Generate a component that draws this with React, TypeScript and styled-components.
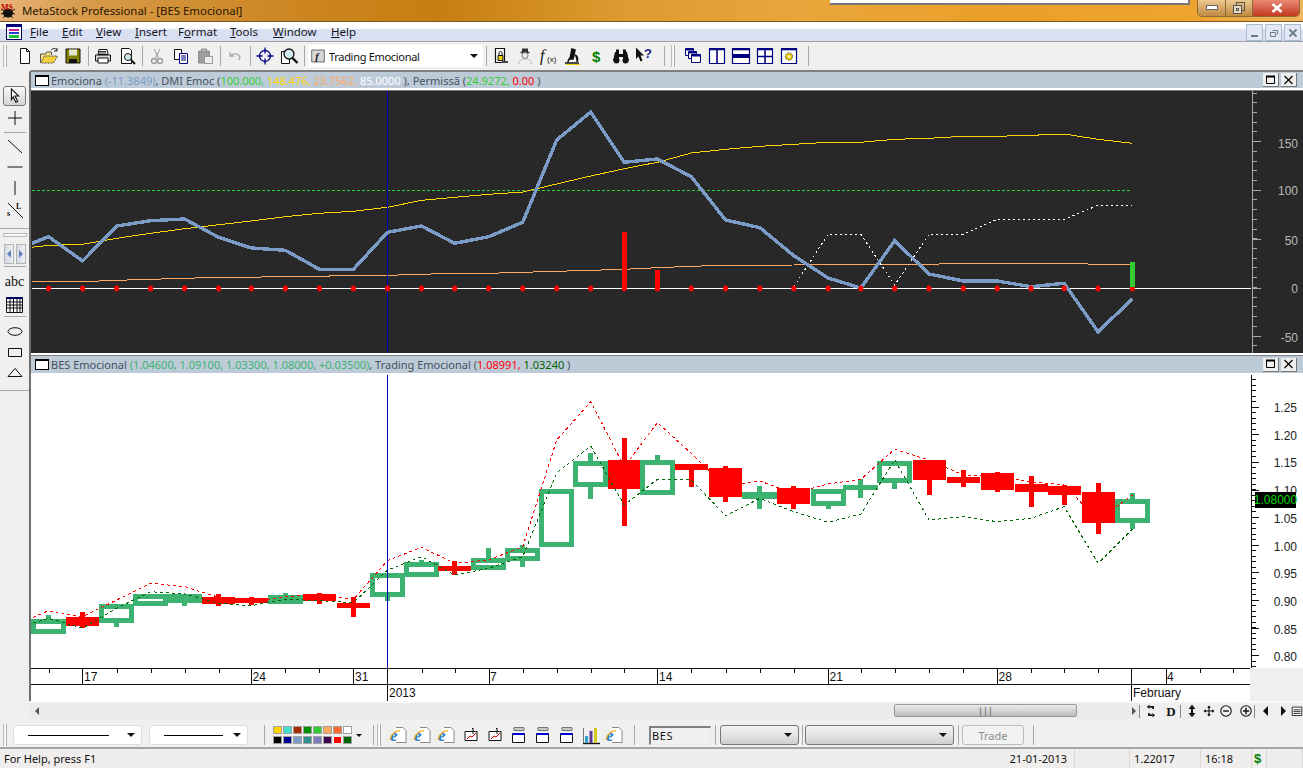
import React from 'react';
import styled, { createGlobalStyle } from 'styled-components';

const GlobalStyle = createGlobalStyle`
  html, body { margin: 0; padding: 0; background: #f0f0f0; overflow: hidden; }
  body { font-family: "Noto Sans", "Liberation Sans", sans-serif; font-size: 11px; color: #111; }
`;

const Window = styled.div`
  width: 1303px;
  height: 768px;
  display: grid;
  grid-template-rows: 21px 21px 28px 649px 30px 19px;
  overflow: hidden;
`;

const TitleBar = styled.div`
  position: relative;
  display: flex;
  align-items: center;
  gap: 6px;
  background: linear-gradient(90deg, #e8b47a 0, #d69a48 90px, #cc8520 300px, #c67e12 440px, #dd9a30 620px, #e8a63c 800px, #ec9f28 1000px, #eea42f 1200px, #efb45e 1303px);
`;

const TitleText = styled.span`
  font-size: 11.4px;
  color: #2a1500;
`;

const BehindWindow = styled.div`
  position: absolute;
  left: 830px;
  top: 0;
  width: 358px;
  height: 3px;
  background: #fff;
  border-right: 2px solid #777;
  border-bottom: 2px solid #777;
`;

const Caption = styled.div`
  position: absolute;
  right: 3px;
  top: 0;
  width: 103px;
  height: 17px;
  display: grid;
  grid-template-columns: 28px 27px 48px;
  border: 1px solid #8a6a38;
  border-top: none;
  border-radius: 0 0 5px 5px;
  box-sizing: border-box;
  overflow: hidden;
`;

const CaptionButton = styled.div<{ $close?: boolean }>`
  display: flex;
  align-items: center;
  justify-content: center;
  background: ${(p) => (p.$close ? 'linear-gradient(#e88a70, #d8604a 50%, #c23a1e)' : 'linear-gradient(#edc892, #d6a868 50%, #c08a40)')};
  border-right: 1px solid #8a6a38;
  &:last-child { border-right: none; }
`;

const MenuBar = styled.div`
  position: relative;
  display: flex;
  align-items: center;
  border-top: 1px solid #7a5a20;
  border-bottom: 1px solid #a2a2a2;
  box-sizing: border-box;
  background: linear-gradient(#fff 0, #fff 6px, #d9e0f2 8px, #d9e0f2 100%);
  padding-left: 6px;
`;

const MenuItems = styled.div`
  display: flex;
  margin-left: 8px;
`;

const MenuItem = styled.span<{ $w: number }>`
  width: ${(p) => p.$w}px;
  font-size: 11.5px;
  color: #16161e;
  u { text-decoration: underline; }
`;

const MdiButtons = styled.div`
  position: absolute;
  right: 2px;
  top: 2px;
  display: flex;
  gap: 2px;
`;

const MdiButton = styled.div`
  width: 17px;
  height: 17px;
  box-sizing: border-box;
  border: 1px solid #a9bdd0;
  background: #e3e8f4;
  display: flex;
  align-items: center;
  justify-content: center;
`;

const ToolBar = styled.div`
  display: flex;
  align-items: center;
  background: #f0f0f0;
  padding-left: 3px;
`;

const Grip = styled.div`
  width: 3px;
  height: 22px;
  margin-right: 7px;
  box-sizing: border-box;
  border-left: 1px solid #bbb;
  border-right: 1px solid #fff;
  box-shadow: 1px 0 0 #aaa;
  flex: none;
`;

const Sep = styled.div<{ $w?: number }>`
  width: ${(p) => p.$w ?? 6}px;
  height: 20px;
  display: flex;
  justify-content: center;
  flex: none;
  &::before { content: ''; width: 1px; height: 100%; background: #a8a8a8; }
`;

const ToolButton = styled.div<{ $w?: number }>`
  width: ${(p) => p.$w ?? 24}px;
  height: 22px;
  display: flex;
  align-items: center;
  justify-content: center;
  flex: none;
`;

const Combo = styled.div`
  width: 175px;
  height: 22px;
  margin-left: 1px;
  background: #fff;
  border-radius: 2px;
  display: flex;
  align-items: center;
  gap: 4px;
  padding: 0 5px 0 3px;
  box-sizing: border-box;
  font-size: 11px;
  letter-spacing: -0.3px;
  flex: none;
`;

const DownCaret = styled.span`
  margin-left: auto;
  width: 0;
  height: 0;
  border-left: 4px solid transparent;
  border-right: 4px solid transparent;
  border-top: 4px solid #111;
`;

const PaletteCaret = styled(DownCaret)`
  margin-left: 0;
  margin-right: 3px;
  border-left-width: 3px;
  border-right-width: 3px;
  border-top-width: 3px;
`;

const Main = styled.div`
  display: grid;
  grid-template-columns: 31px 1fr;
  min-height: 0;
`;

const SideBar = styled.div`
  background: #f0f0f0;
  border-right: 2px solid #6e6e6e;
  border-top: 2px solid #f0f0f0;
  box-sizing: border-box;
  display: flex;
  flex-direction: column;
  align-items: center;
  padding-top: 14px;
`;

const SideSlot = styled.div<{ $h?: number; $active?: boolean }>`
  width: 23px;
  height: ${(p) => p.$h ?? 21}px;
  box-sizing: border-box;
  display: flex;
  align-items: center;
  justify-content: center;
  flex: none;
  ${(p) => p.$active && 'border: 1px solid #777; border-radius: 3px; background: linear-gradient(#fafafa, #d4d4d4);'}
`;

const SideRule = styled.div<{ $my?: number }>`
  width: 22px;
  height: 1px;
  background: #a8a8a8;
  margin: ${(p) => p.$my ?? 2}px 0;
  flex: none;
`;

const SideBreak = styled.div`
  align-self: stretch;
  height: 1px;
  background: #a8a8a8;
  margin-top: 6px;
  flex: none;
`;

const SideGrip = styled.div`
  width: 22px;
  height: 2px;
  border: 1px solid #bbb;
  background: #f8f8f8;
  margin: 4px 0 7px;
  flex: none;
`;

const ArrowPair = styled.div`
  width: 22px;
  height: 20px;
  flex: none;
  display: grid;
  grid-template-columns: 1fr 1fr;
  gap: 2px;
  div {
    background: linear-gradient(90deg, #d5dae2, #eef0f4);
    border: 1px solid #b5b5b5;
    display: flex;
    align-items: center;
    justify-content: center;
  }
`;

const Abc = styled.span`
  font-family: "Liberation Serif", serif;
  font-size: 14px;
  color: #111;
`;

const Panes = styled.div`
  display: flex;
  flex-direction: column;
  min-width: 0;
`;

const PaneGap = styled.div`
  height: 3px;
  box-sizing: border-box;
  background: #fff;
  border-bottom: 1px solid #808080;
  flex: none;
`;

const LegendBar = styled.div<{ $h: number; $top: string }>`
  height: ${(p) => p.$h}px;
  box-sizing: border-box;
  background: #bdcbd9;
  border-top: ${(p) => p.$top};
  border-bottom: 2px solid #fff;
  display: flex;
  align-items: center;
  padding: 0 6px 0 4px;
  flex: none;
  font-size: 11px;
  color: #47505c;
  white-space: pre;
`;

const LegendSwatch = styled.span`
  width: 12px;
  height: 8px;
  border: 1px solid #000;
  border-top-width: 2px;
  background: #fff;
  margin-right: 2px;
  flex: none;
`;

const Val = styled.span<{ $c: string }>`
  color: ${(p) => p.$c};
`;

const LegendButtons = styled.div`
  margin-left: auto;
  display: flex;
  gap: 2px;
`;

const LegendButton = styled.div`
  width: 15px;
  height: 13px;
  background: #efefef;
  border-right: 1px solid #777;
  border-bottom: 1px solid #777;
  display: flex;
  align-items: center;
  justify-content: center;
`;

const Plot = styled.svg<{ $h: number; $bg: string }>`
  display: block;
  width: 1272px;
  height: ${(p) => p.$h}px;
  background: ${(p) => p.$bg};
  flex: none;
  text { font-family: "Liberation Sans", Arial, sans-serif; font-size: 12px; }
`;

const DateRow = styled.div`
  display: flex;
  height: 33px;
  flex: none;
`;

const DateAxis = styled.svg`
  display: block;
  width: 1219px;
  height: 33px;
  background: #fff;
  flex: none;
  text { font-family: "Liberation Sans", Arial, sans-serif; font-size: 12px; fill: #111; }
`;

const DateBlank = styled.div`
  flex: 1;
  background: #efefef;
`;

const ScrollRow = styled.div`
  display: flex;
  align-items: center;
  height: 18px;
  margin-left: -2px;
  position: relative;
  box-sizing: border-box;
  border-top: 2px solid #fafafa;
  background: #efefef;
  flex: none;
`;

const ScrollTrack = styled.div`
  position: relative;
  width: 1110px;
  height: 100%;
  background: #ebebeb;
  display: flex;
  align-items: center;
  justify-content: space-between;
  padding: 0 3px 0 6px;
  box-sizing: border-box;
  flex: none;
`;

const ScrollThumb = styled.div`
  position: absolute;
  left: 865px;
  top: 1px;
  width: 183px;
  height: 13px;
  border: 1px solid #999;
  border-radius: 2px;
  box-sizing: border-box;
  background: linear-gradient(#ececec, #d4d4d4 50%, #bcbcbc);
  display: flex;
  align-items: center;
  justify-content: center;
  color: #555;
  font-size: 9px;
`;

const Tri = styled.span<{ $dir: 'l' | 'r'; $c?: string; $s?: number }>`
  width: 0;
  height: 0;
  border-top: ${(p) => p.$s ?? 4}px solid transparent;
  border-bottom: ${(p) => p.$s ?? 4}px solid transparent;
  ${(p) => (p.$dir === 'l' ? 'border-right' : 'border-left')}: ${(p) => p.$s ?? 4}px solid ${(p) => p.$c ?? '#555'};
`;

const NavTools = styled.div`
  display: flex;
  align-items: center;
  flex: none;
`;

const NavSep = styled.div`
  width: 1px;
  height: 13px;
  background: #888;
  flex: none;
`;

const NavButton = styled.div<{ $w: number }>`
  width: ${(p) => p.$w}px;
  display: flex;
  justify-content: center;
  align-items: center;
  flex: none;
`;

const NavLetter = styled.span`
  font-family: "Liberation Serif", serif;
  font-weight: 700;
  font-size: 13px;
  line-height: 13px;
`;

const BottomBar = styled.div`
  display: flex;
  align-items: center;
  background: #f0f0f0;
  border-bottom: 2px solid #a5a5a5;
  box-sizing: border-box;
  padding: 4px 0 0 3px;
`;

const LineSelect = styled.div<{ $w: number; $line: number }>`
  width: ${(p) => p.$w}px;
  height: 20px;
  background: #fff;
  border: 1px solid #dcdcdc;
  border-radius: 3px;
  box-sizing: border-box;
  display: flex;
  align-items: center;
  padding: 0 6px 0 14px;
  margin-right: 7px;
  flex: none;
  &::before { content: ''; width: ${(p) => p.$line}px; height: 1px; background: #000; }
`;

const Palette = styled.div`
  display: grid;
  grid-template-columns: repeat(8, 9px);
  grid-auto-rows: 8px;
  gap: 2px 1px;
  flex: none;
`;

const Swatch = styled.span<{ $c: string; $sel?: boolean }>`
  background: ${(p) => p.$c};
  box-shadow: inset 0 0 0 1px ${(p) => (p.$sel ? '#eee' : '#a0a0a0')};
`;

const SymbolBox = styled.div`
  width: 62px;
  height: 19px;
  margin-left: 8px;
  border-top: 2px solid #808080;
  border-left: 2px solid #808080;
  border-right: 1px solid #e8e8e8;
  border-bottom: 1px solid #e8e8e8;
  box-sizing: border-box;
  padding-left: 1px;
  font-size: 11px;
  line-height: 15px;
  letter-spacing: 0.6px;
  flex: none;
`;

const GreySelect = styled.div<{ $w: number }>`
  width: ${(p) => p.$w}px;
  height: 20px;
  border: 1px solid #777;
  border-radius: 3px;
  box-sizing: border-box;
  background: linear-gradient(#f2f2f2, #e4e4e4 50%, #cfcfcf);
  display: flex;
  align-items: center;
  padding-right: 6px;
  flex: none;
`;

const TradeButton = styled.div`
  width: 62px;
  height: 20px;
  border: 1px solid #bcbcbc;
  border-radius: 3px;
  box-sizing: border-box;
  color: #8a8a8a;
  background: #f2f2f2;
  display: flex;
  align-items: center;
  justify-content: center;
  flex: none;
`;

const StatusBar = styled.div`
  display: grid;
  grid-template-columns: 1075px 55px 71px 51px 15px 1fr;
  align-items: center;
  background: #f0eded;
  font-size: 11px;
  color: #111;
`;

const StatusCell = styled.div<{ $center?: boolean }>`
  height: 100%;
  display: flex;
  align-items: center;
  ${(p) => p.$center && 'justify-content: center;'}
  box-sizing: border-box;
  padding: 0 7px 0 4px;
  border-right: 1px solid #dcd8d8;
`;

const StatusPush = styled.span`
  margin-right: auto;
`;

const Dollar = styled.span`
  color: #008000;
  font-family: "Liberation Sans", sans-serif;
  font-weight: 700;
  font-size: 13px;
`;

const Svg = ({ s = 20, children }: { s?: number; children: React.ReactNode }) => (
  <svg width={s} height={s} viewBox="0 0 20 20" fill="none" style={{ display: 'block' }}>
    {children}
  </svg>
);

const IE = () => (
  <Svg>
    <path d="M7 2.5h7l3 3v12H7" fill="#fff" stroke="#8a8a8a" />
    <text x="1" y="16" fontFamily="Liberation Serif, serif" fontWeight="700" fontStyle="italic" fontSize="17" fill="#1f78d1">e</text>
    <path d="M1 15C2 9 7 5 11 6" stroke="#f0b020" strokeWidth="1.3" />
  </Svg>
);

const MiniChart = () => (
  <Svg>
    <path d="M4 6.5h12v9H4z" fill="#fff" stroke="#111" />
    <path d="M6 14l3-3 2 1 4-4" stroke="#c00" />
    <path d="M12 3v6" stroke="#111" />
    <path d="M11 4l1-1" stroke="#111" />
  </Svg>
);

const MiniWin = () => (
  <Svg>
    <path d="M5 2.5h10v3H5z" fill="#c8c8c8" stroke="#777" />
    <path d="M3.5 8.5h12v9h-12z" fill="#fff" stroke="#111" />
    <path d="M3.5 9h12" stroke="#0000d0" strokeWidth="2" />
  </Svg>
);

const icons: Record<string, React.ReactNode> = {
  new: <Svg><path d="M5.5 2.5h6l3 3v12h-9z" fill="#fff" stroke="#111" /><path d="M11.5 2.5v3h3" stroke="#111" /></Svg>,
  open: <Svg><path d="M1.5 17V8h5l1-2h5v3" fill="#f6e27a" stroke="#555" /><path d="M1.5 17l4-7h13l-4 7z" fill="#f2d040" stroke="#555" strokeDasharray="2 1" /><path d="M12 4c2-2 4-2 6 0M18 2v3h-3" stroke="#222" /></Svg>,
  save: <Svg><path d="M3 3h14v14H3z" fill="#808000" stroke="#111" /><path d="M6 3.5h8v6H6z" fill="#e5e5cf" /><path d="M6 13h8v4H6z" fill="#111" /></Svg>,
  print: <Svg><path d="M6 3.5h8l1 5H5z" fill="#fff" stroke="#111" /><path d="M2.5 9h15v6h-15z" fill="#d8d8d8" stroke="#111" /><path d="M5 12h10v5H5z" fill="#fff" stroke="#111" /><path d="M6 5.5h7M6 7h7" stroke="#333" /></Svg>,
  preview: <Svg><path d="M4.5 2.5h8l2 2v13h-10z" fill="#fff" stroke="#111" /><circle cx="11" cy="11" r="3.5" fill="#cfe8f0" stroke="#111" /><path d="M14 14l4 4" stroke="#111" strokeWidth="2" /></Svg>,
  cut: <Svg><path d="M7 3l4.5 9M13 3L8.5 12" stroke="#999" /><circle cx="7" cy="15" r="2.5" stroke="#999" strokeWidth="1.3" /><circle cx="13" cy="15" r="2.5" stroke="#999" strokeWidth="1.3" /></Svg>,
  copy: <Svg><path d="M3.5 3.5h7v10h-7z" fill="#fff" stroke="#111" /><path d="M8.5 7.5h8v10h-8z" fill="#fff" stroke="#000080" /><path d="M10 10h5M10 12h5M10 14h5" stroke="#000080" /></Svg>,
  paste: <Svg><path d="M3.5 5h11v12h-11z" fill="#9e9e9e" stroke="#8a8a8a" /><path d="M6.5 3h5v3h-5z" fill="#bcbcbc" stroke="#8a8a8a" /><path d="M9.5 10.5h8v7h-8z" fill="#eee" stroke="#999" /></Svg>,
  undo: <Svg><path d="M5 6v4h4" stroke="#aaa" strokeWidth="1.4" /><path d="M5.5 10C8 7 13 7 15 11l-1 3" stroke="#aaa" strokeWidth="1.4" /></Svg>,
  target: <Svg><circle cx="10" cy="10" r="5.5" stroke="#000080" strokeWidth="1.3" /><path d="M10 1.5v6M10 12.5v6M1.5 10h6M12.5 10h6" stroke="#000080" strokeWidth="1.3" /></Svg>,
  zoom: <Svg><path d="M2.5 5.5h8v12h-8z" fill="#fff" stroke="#111" /><circle cx="10" cy="8" r="5" fill="#cfeaf0" stroke="#111" strokeWidth="1.3" /><path d="M13.5 12l5 5" stroke="#111" strokeWidth="2.4" /></Svg>,
  fn: <Svg s={14}><path d="M1 1.5h18v17H1z" fill="#d8d8d8" stroke="#666" strokeWidth="1.4" /><text x="6" y="15" fontFamily="Liberation Serif, serif" fontStyle="italic" fontWeight="700" fontSize="15" fill="#111">f</text></Svg>,
  lock: <Svg><path d="M4.5 2.5h9v14h-9z" fill="#fff" stroke="#111" strokeWidth="1.2" /><path d="M7 9.5h5v5H7z" fill="#e8d000" stroke="#111" /><path d="M8 9V7c0-2 3-2 3 0v2" stroke="#111" /><path d="M11 15h6v2h-6z" fill="#444" /></Svg>,
  spy: <Svg><path d="M5.5 6.5h9" stroke="#333" strokeWidth="1.5" /><path d="M7 2.5h6v4H7z" fill="#333" /><circle cx="10" cy="9.5" r="3" fill="#eee" stroke="#777" /><path d="M4 18v-3l4-2h4l4 2v3" stroke="#999" strokeDasharray="1 1" /></Svg>,
  fx: <Svg><text x="1" y="15" fontFamily="Liberation Serif, serif" fontStyle="italic" fontSize="16" fill="#111">f</text><text x="8" y="16" fontFamily="Liberation Sans, sans-serif" fontSize="8" fill="#111">(x)</text></Svg>,
  scope: <Svg><path d="M2 17h14" stroke="#111" strokeWidth="1.5" /><path d="M3 18.5h14" stroke="#e8d000" /><path d="M9 3l3 1-2 9H7zM5 16c0-3 2-4 3-5M12 9c3 1 3 5 2 7" stroke="#111" strokeWidth="1.6" fill="#111" /></Svg>,
  dollar: <Svg><text x="5" y="15.5" fontFamily="Liberation Sans, sans-serif" fontWeight="700" fontSize="15" fill="#008000">$</text></Svg>,
  binoc: <Svg><path d="M2 15l2-9h4v9zM18 15l-2-9h-4v9z" fill="#111" /><path d="M5 3.5h3v3H5zM12 3.5h3v3h-3zM8 8h4v3H8z" fill="#111" /><circle cx="5.5" cy="14.5" r="3" fill="#111" /><circle cx="14.5" cy="14.5" r="3" fill="#111" /></Svg>,
  help: <Svg><path d="M1 1.5l8 8H5.5l2 5-2 1-2-5L1 13z" fill="#111" /><text x="9" y="12" fontFamily="Liberation Sans, sans-serif" fontWeight="700" fontSize="13" fill="#1a1a90">?</text></Svg>,
  cascade: <Svg><path d="M2.5 2.5h8v7h-8z" fill="#fff" stroke="#000080" /><path d="M2.5 2.5h8v2h-8z" fill="#000080" /><path d="M5.5 5.5h8v7h-8z" fill="#fff" stroke="#000080" /><path d="M5.5 5.5h8v2h-8z" fill="#000080" /><path d="M8.5 8.5h9v8h-9z" fill="#fff" stroke="#000080" /><path d="M8.5 8.5h9v2h-9z" fill="#000080" /></Svg>,
  split: <Svg><path d="M2.5 2.5h15v15h-15z" fill="#fff" stroke="#000080" strokeWidth="1.2" /><path d="M2.5 3.5h15M10 3v14" stroke="#000080" strokeWidth="1.6" /></Svg>,
  stack: <Svg><path d="M1.5 2.5h17v15h-17z" fill="#fff" stroke="#000080" strokeWidth="1.2" /><path d="M1.5 8h17v4h-17z" fill="#000080" /><path d="M1.5 3.5h17" stroke="#000080" strokeWidth="1.6" /></Svg>,
  grid: <Svg><path d="M2.5 2.5h15v15h-15z" fill="#fff" stroke="#000080" strokeWidth="1.2" /><path d="M2.5 3.5h15M10 3v14M2.5 10.5h15" stroke="#000080" strokeWidth="1.6" /></Svg>,
  gear: <Svg><path d="M2.5 2.5h15v15h-15z" fill="#fff" stroke="#000080" strokeWidth="1.2" /><path d="M2.5 3.5h15" stroke="#000080" strokeWidth="1.6" /><circle cx="10" cy="10.5" r="3.6" fill="#e8c800" stroke="#444" strokeDasharray="1.5 1" /><circle cx="10" cy="10.5" r="1.2" fill="#fff" /></Svg>,
  arrow: <Svg s={18}><path d="M6 2l8 8H10l3 6-2 1-3-6-2 3z" fill="#fff" stroke="#111" strokeWidth="1.2" /></Svg>,
  plus: <Svg><path d="M10 3v14M3 10h14" stroke="#111" /></Svg>,
  diag: <Svg><path d="M3 4l14 13" stroke="#111" /></Svg>,
  hline: <Svg><path d="M2.5 10h15" stroke="#111" /></Svg>,
  vline: <Svg><path d="M10 3v14" stroke="#111" /></Svg>,
  speed: <Svg><path d="M3 3l15 15" stroke="#111" /><text x="11" y="9" fontFamily="Liberation Serif, serif" fontWeight="700" fontSize="8" fill="#111">L</text><text x="2" y="16" fontFamily="Liberation Serif, serif" fontWeight="700" fontSize="8" fill="#111">s</text></Svg>,
  cal: <Svg><path d="M1.5 3.5h16v15h-16z" fill="#fff" stroke="#111" /><path d="M1.5 3h16v2h-16z" fill="#000060" /><path d="M5 5v13M8.5 5v13M12 5v13M15 5v13M1.5 8h16M1.5 11h16M1.5 14h16" stroke="#111" /></Svg>,
  ellipse: <Svg><ellipse cx="10" cy="10.5" rx="7" ry="3.8" stroke="#111" /></Svg>,
  rect: <Svg><path d="M3.5 6.5h13v8h-13z" stroke="#111" /></Svg>,
  tri: <Svg><path d="M10 5.5l7 8H3z" stroke="#111" /></Svg>,
  refresh: <Svg s={14}><path d="M8 4h5v3M12 16H7v-3" stroke="#111" strokeWidth="2.4" /><path d="M8 1v6l-4-3zM12 19v-6l4 3z" fill="#111" /></Svg>,
  updown: <Svg s={14}><path d="M10 1l5 6H5zM10 19l5-6H5z" fill="#111" /><path d="M10 6v8" stroke="#111" strokeWidth="3" /></Svg>,
  move: <Svg s={14}><path d="M10 2v16M2 10h16" stroke="#111" strokeWidth="1.8" /><path d="M10 1l3 4H7zM10 19l3-4H7zM1 10l4-3v6zM19 10l-4-3v6z" fill="#111" /></Svg>,
  minus: <Svg s={14}><circle cx="10" cy="10" r="7.5" stroke="#111" strokeWidth="1.5" /><path d="M6 10h8" stroke="#111" strokeWidth="2" /></Svg>,
  add: <Svg s={14}><circle cx="10" cy="10" r="7.5" stroke="#111" strokeWidth="1.5" /><path d="M5.5 10h9M10 5.5v9" stroke="#111" strokeWidth="2" /></Svg>,
  list: <Svg s={14}><path d="M2 3.5h16v14H2z" fill="#fff" stroke="#111" strokeWidth="1.4" /><path d="M4 8h12M4 11h12M4 14h12" stroke="#111" strokeWidth="1.4" /></Svg>,
  bars: <Svg><path d="M2 18.5h17" stroke="#111" strokeWidth="1.4" /><path d="M4 11h3v7H4z" fill="#2a9fd0" /><path d="M8.5 6h3v12h-3z" fill="#5a3a90" /><path d="M13 3h3v15h-3z" fill="#d0c820" /><path d="M2.5 3v15" stroke="#777" /></Svg>,
};

const X = [48.6, 82.6, 116.6, 150.6, 184.6, 218.6, 251.4, 285.4, 319.4, 353.4, 387.5, 421.5, 454.7, 488.7, 522.7, 556.7, 590.7, 624.3, 657.4, 691.3, 725.6, 759.9, 793.8, 828.1, 860.8, 894.7, 929, 963.3, 997.2, 1031, 1064.2, 1098, 1132.4];

const withX = (ys: number[]) => ys.map((y, i) => `${X[i]},${y}`).join(' ');

const BLUE = [236.7, 261, 226, 220.7, 219, 237.3, 248, 250.3, 269.3, 269.3, 232.3, 226, 243.3, 236.7, 222.3, 140, 112, 162.3, 159, 176.7, 220, 227.7, 255.7, 278, 288, 240.7, 274, 281, 281, 286.7, 283.3, 331.7, 299];
const YELLOW = [245.3, 244.3, 238.3, 233.3, 228.7, 224.7, 221, 216.7, 213.3, 211.3, 207.3, 200.3, 197.3, 194.3, 192, 184, 176, 168.7, 162.3, 153, 149.3, 146.3, 144.3, 142.3, 142.3, 139.3, 138.3, 136.3, 136.3, 135.3, 134, 139.3, 143.3];
const ORANGE = [281.7, 281.7, 280.3, 279.3, 278.3, 277.3, 277.3, 276.3, 276.3, 275.3, 275.3, 274.3, 273.3, 273.3, 272.3, 271.3, 270.3, 269.3, 267.7, 266.3, 265.3, 265.3, 265, 264.3, 264.3, 264.3, 264.3, 263.3, 263.3, 263.3, 263.3, 264.3, 264.3];
const DOTTED = '793.8,286.7 828.1,234.3 860.8,234.3 894.7,285 929,234.3 963.3,234.3 997.2,219.3 1031,219.3 1064.2,219.3 1098,205.3 1132.4,205.3';

const RED_BAND = [610.7, 616.7, 600, 583.3, 586.7, 597.3, 601.7, 596.7, 594.3, 599.3, 560.7, 547.3, 563.3, 560, 546.7, 440, 401.7, 466.7, 422.7, 453.3, 486.7, 481, 493.3, 484, 479.3, 449.3, 460, 475, 476.7, 481.7, 485, 520, 495];
const GREEN_BAND = [618.3, 628.3, 608.3, 591.7, 594, 603.3, 605.7, 599.3, 600.7, 602.7, 570, 556.7, 575, 568.3, 556.7, 473, 446, 505, 479.3, 480, 515.7, 498.3, 511.7, 522.3, 514, 460, 520, 516.7, 521.7, 518.3, 506.7, 563.3, 529.3];

// up, body top, body bottom, wick top, wick bottom
const CANDLES: [boolean, number, number, number, number][] = [
  [true, 619.3, 634, 615, 634],
  [false, 617.3, 626, 612.3, 628],
  [true, 604, 622.7, 604, 626.7],
  [true, 594.3, 605.7, 594.3, 605.7],
  [true, 594.3, 603, 594.3, 605.7],
  [false, 597.3, 604, 594.3, 605.7],
  [false, 598.3, 602.7, 597, 604.7],
  [true, 595, 604, 592.7, 604],
  [false, 594.3, 601.3, 592.7, 604],
  [false, 602.7, 608, 597.3, 616.7],
  [true, 573.3, 596.7, 573.3, 600.7],
  [true, 562.3, 576.7, 560, 576.7],
  [false, 566, 571, 561.3, 575.3],
  [true, 558, 570, 548.3, 570],
  [true, 548.3, 560.7, 545, 567.3],
  [true, 489, 547.3, 489, 547.3],
  [true, 461, 486.7, 452.7, 499.3],
  [false, 460, 489, 438.3, 525.7],
  [true, 460, 495, 455, 495],
  [false, 464, 470, 464, 487.3],
  [false, 468, 496.7, 466, 501.7],
  [true, 491.7, 499, 486, 509.3],
  [false, 488, 504, 486, 509.3],
  [true, 489, 505.7, 489, 509.3],
  [true, 485, 489.3, 479.3, 498.3],
  [true, 461, 482.7, 461, 489.3],
  [false, 460, 480, 460, 495.3],
  [false, 477, 482.7, 470, 486.7],
  [false, 473, 490, 472, 491.7],
  [false, 484, 491.7, 476, 506.7],
  [false, 486, 494.7, 485, 505],
  [false, 492, 522.7, 483.3, 534.3],
  [true, 499, 522.7, 493.3, 529.3],
];

const GREEN = '#3cb371';

const Candle = ({ x, c }: { x: number; c: [boolean, number, number, number, number] }) => {
  const [up, top, bottom, wickTop, wickBottom] = c;
  const colour = up ? GREEN : '#ff0000';
  return (
    <g shapeRendering="crispEdges">
      <path d={`M${x} ${wickTop}V${wickBottom}`} stroke={colour} strokeWidth={5} />
      {up ? (
        <rect x={x - 15} y={top + 2.5} width={30} height={Math.max(bottom - top - 5, 0.1)} fill="#fff" stroke={GREEN} strokeWidth={5} />
      ) : (
        <rect x={x - 16.5} y={top} width={33} height={bottom - top} fill="#ff0000" />
      )}
    </g>
  );
};

const range = (from: number, step: number, n: number) => Array.from({ length: n }, (_, i) => from + step * i);

const TopChart = () => (
  <Plot viewBox="31 90 1272 263" $h={263} $bg="#282828">
    <path d="M31 90.5H1303" stroke="#777" />
    <g shapeRendering="crispEdges" fill="none">
      <polyline points={`32,190 ${X[32]},190`} stroke="#32cd32" strokeDasharray="3 2" />
      <polyline points={`32,281.7 ${withX(ORANGE)}`} stroke="#ffa860" />
      <polyline points={`32,247.3 ${withX(YELLOW)}`} stroke="#ffd700" />
      <polyline points={DOTTED} stroke="#fff" strokeDasharray="2 3" />
      <path d="M32 288.5H1251" stroke="#fff" />
      <path d="M387.5 91V353" stroke="#0000c0" />
      <polyline points={`32,243.3 ${withX(BLUE)}`} stroke="#7a9cc6" strokeWidth={3.4} />
    </g>
    {X.map((x) => (
      <ellipse key={x} cx={x} cy={288.5} rx={2.5} ry={3} fill="#ff0000" />
    ))}
    <g shapeRendering="crispEdges">
      <path d="M624.3 232V288M657.4 270V288" stroke="#ff0000" strokeWidth={5} />
      <path d="M1132.4 262V287" stroke="#32cd32" strokeWidth={5} />
      <path d="M1252.5 90V353" stroke="#aaa" />
      {range(93, 9.72, 27).map((y) => (
        <path key={y} d={`M1253 ${y}H1256.5`} stroke="#aaa" />
      ))}
      {[141.7, 190.3, 239.7, 288.3, 336.7].map((y) => (
        <path key={y} d={`M1253 ${y}H1261`} stroke="#aaa" />
      ))}
    </g>
    {[['150', 148], ['100', 195], ['50', 245], ['0', 293], ['-50', 342]].map(([t, y]) => (
      <text key={t} x={1298} y={y} textAnchor="end" fill="#b8b8b8">{t}</text>
    ))}
  </Plot>
);

const BottomChart = () => (
  <Plot viewBox="31 375 1272 293" $h={293} $bg="#fff">
    {X.map((x, i) => (
      <Candle key={x} x={x} c={CANDLES[i]} />
    ))}
    <g shapeRendering="crispEdges" fill="none">
      <polyline points={`33,617.3 ${withX(RED_BAND)}`} stroke="#ff0000" strokeDasharray="3 3" />
      <polyline points={`33,623 ${withX(GREEN_BAND)}`} stroke="#006400" strokeDasharray="3 3" />
      <path d="M387.5 375V668" stroke="#0000c0" />
      <path d="M1251.5 375V668" stroke="#111" />
      {range(379.5, 5.52, 53).map((y) => (
        <path key={y} d={`M1252 ${y}H1255.5`} stroke="#111" />
      ))}
      {range(407.3, 27.6, 10).map((y) => (
        <path key={y} d={`M1252 ${y}H1259`} stroke="#111" />
      ))}
    </g>
    {['1.25', '1.20', '1.15', '1.10', '1.05', '1.00', '0.95', '0.90', '0.85', '0.80'].map((t, i) => (
      <text key={t} x={1297} y={412 + i * 27.7} textAnchor="end" fill="#222">{t}</text>
    ))}
    <rect x={1255} y={492} width={41} height={16} fill="#000" />
    <text x={1275.5} y={504} textAnchor="middle" fill="#00d800">1.08000</text>
  </Plot>
);

const MAJOR = [82.3, 251, 353.3, 387.3, 488.7, 657.3, 828, 996.7, 1131.3, 1165.7];
const MINOR = [48.6, 116.6, 150.6, 184.6, 218.6, 285.4, 319.4, 421.5, 454.7, 522.7, 556.7, 590.7, 624.3, 691.3, 725.6, 759.9, 793.8, 860.8, 894.7, 929, 963.3, 1031, 1064.2, 1098, 1199.7, 1233];
const DATES: [string, number][] = [['17', 84], ['24', 252.5], ['31', 355], ['7', 490], ['14', 659], ['21', 829.5], ['28', 998.5], ['4', 1167]];

const Dates = () => (
  <DateAxis viewBox="31 668 1219 33">
    <g shapeRendering="crispEdges" fill="none" stroke="#111">
      <path d="M31 668.5H1250M31 684.5H1250" />
      {MAJOR.map((x) => (
        <path key={x} d={`M${Math.round(x) + 0.5} 668V684`} />
      ))}
      {MINOR.map((x) => (
        <path key={x} d={`M${Math.round(x) + 0.5} 668V673`} />
      ))}
      <path d="M387.5 684V701M1131.5 684V701" />
    </g>
    {DATES.map(([t, x]) => (
      <text key={t} x={x} y={681}>{t}</text>
    ))}
    <text x={389} y={697}>2013</text>
    <text x={1133} y={697}>February</text>
  </DateAxis>
);

const Legend = ({ top, h, children }: { top: string; h: number; children: React.ReactNode }) => (
  <LegendBar $h={h} $top={top}>
    <LegendSwatch />
    {children}
    <LegendButtons>
      <LegendButton>
        <svg width="11" height="10" viewBox="0 0 11 10" style={{ display: 'block' }}>
          <path d="M1.5 1.5h8v7h-8z" fill="none" stroke="#000" />
          <path d="M1 1.5h9" stroke="#000" strokeWidth="2" />
        </svg>
      </LegendButton>
      <LegendButton>
        <svg width="11" height="10" viewBox="0 0 11 10" style={{ display: 'block' }}>
          <path d="M1.5 1l8 8M9.5 1l-8 8" stroke="#000" strokeWidth="1.2" />
        </svg>
      </LegendButton>
    </LegendButtons>
  </LegendBar>
);

const PALETTE = ['#ffd700', '#40e0d0', '#a52a00', '#009000', '#32cd32', '#ffa860', '#ff6a2a', '#ffffff', '#000000', '#000090', '#7a9cc6', '#339090', '#7b7bc0', '#400050', '#ff0000', '#006400'];

const TopButtons = (names: string[]) => names.map((n) => <ToolButton key={n}>{icons[n]}</ToolButton>);

const MENU: [React.ReactNode, number][] = [
  [<><u>F</u>ile</>, 32],
  [<><u>E</u>dit</>, 34],
  [<><u>V</u>iew</>, 39],
  [<><u>I</u>nsert</>, 43],
  [<>F<u>o</u>rmat</>, 52],
  [<><u>T</u>ools</>, 43],
  [<><u>W</u>indow</>, 58],
  [<><u>H</u>elp</>, 40],
];

export default function App() {
  return (
    <Window>
      <GlobalStyle />
      <TitleBar>
        <svg width="16" height="16" viewBox="0 0 16 16" style={{ display: 'block' }}>
          <ellipse cx="8" cy="10" rx="5" ry="4.5" fill="#111" />
          <path d="M1 6l4 3M1 11l3-1M15 6l-4 3M15 11l-3-1M3 15l3-3M13 15l-3-3" stroke="#111" />
          <text x="1" y="7" fontFamily="Liberation Serif, serif" fontWeight="700" fontSize="8" fill="#c00000">MS</text>
        </svg>
        <TitleText>MetaStock Professional - [BES Emocional]</TitleText>
        <BehindWindow />
        <Caption>
          <CaptionButton>
            <svg width="12" height="6" style={{ display: 'block' }}><rect x="0.5" y="0.5" width="11" height="4" fill="#fff" stroke="#666" /></svg>
          </CaptionButton>
          <CaptionButton>
            <svg width="12" height="12" style={{ display: 'block' }}><rect x="3.5" y="0.5" width="8" height="8" fill="none" stroke="#555" /><rect x="0.5" y="3.5" width="8" height="8" fill="#e8d8c0" stroke="#555" /><rect x="3.5" y="6.5" width="2" height="2" fill="none" stroke="#555" /></svg>
          </CaptionButton>
          <CaptionButton $close>
            <svg width="12" height="10" style={{ display: 'block' }}><path d="M1.5 1l9 8M10.5 1l-9 8" stroke="#fff" strokeWidth="2.6" /></svg>
          </CaptionButton>
        </Caption>
      </TitleBar>

      <MenuBar>
        <svg width="16" height="16" viewBox="0 0 16 16" style={{ display: 'block' }}>
          <rect x="0.5" y="0.5" width="15" height="15" fill="#fff" stroke="#000060" />
          <rect x="1" y="1" width="14" height="2" fill="#000080" />
          <rect x="3" y="5" width="10" height="2" fill="#d02090" />
          <rect x="3" y="8" width="10" height="2" fill="#2040d0" />
          <rect x="3" y="11" width="10" height="3" fill="#20c040" />
        </svg>
        <MenuItems>
          {MENU.map(([label, w], i) => (
            <MenuItem key={i} $w={w}>{label}</MenuItem>
          ))}
        </MenuItems>
        <MdiButtons>
          <MdiButton>
            <svg width="10" height="10" style={{ display: 'block' }}><rect x="1" y="7" width="7" height="2" fill="#6a7a8a" /></svg>
          </MdiButton>
          <MdiButton>
            <svg width="10" height="10" style={{ display: 'block' }}><path d="M3.5 2.5h5v4M1.5 4.5h5v4h-5z" fill="none" stroke="#6a7a8a" /></svg>
          </MdiButton>
          <MdiButton>
            <svg width="10" height="10" style={{ display: 'block' }}><path d="M1.5 1.5l7 7M8.5 1.5l-7 7" stroke="#6a7a8a" strokeWidth="1.8" /></svg>
          </MdiButton>
        </MdiButtons>
      </MenuBar>

      <ToolBar>
        <Grip />
        {TopButtons(['new', 'open', 'save'])}
        <Sep />
        {TopButtons(['print', 'preview'])}
        <Sep />
        {TopButtons(['cut', 'copy', 'paste'])}
        <Sep />
        {TopButtons(['undo'])}
        <Sep />
        {TopButtons(['target', 'zoom'])}
        <Sep />
        <Combo>
          {icons.fn}
          Trading Emocional
          <DownCaret />
        </Combo>
        <Sep />
        {TopButtons(['lock', 'spy', 'fx', 'scope', 'dollar', 'binoc', 'help'])}
        <Sep $w={14} />
        <Grip />
        {TopButtons(['cascade', 'split', 'stack', 'grid', 'gear'])}
        <Sep $w={14} />
      </ToolBar>

      <Main>
        <SideBar>
          <SideSlot $active $h={20}>{icons.arrow}</SideSlot>
          <SideSlot $h={24}>{icons.plus}</SideSlot>
          <SideRule />
          <SideSlot>{icons.diag}</SideSlot>
          <SideSlot>{icons.hline}</SideSlot>
          <SideSlot>{icons.vline}</SideSlot>
          <SideSlot $h={24}>{icons.speed}</SideSlot>
          <SideBreak />
          <SideGrip />
          <ArrowPair>
            <div><Tri $dir="l" $c="#6080c0" /></div>
            <div><Tri $dir="r" $c="#6080c0" /></div>
          </ArrowPair>
          <SideRule />
          <SideSlot $h={26}><Abc>abc</Abc></SideSlot>
          <SideSlot $h={18}>{icons.cal}</SideSlot>
          <SideRule $my={3} />
          <SideSlot>{icons.ellipse}</SideSlot>
          <SideSlot>{icons.rect}</SideSlot>
          <SideSlot $h={22}>{icons.tri}</SideSlot>
          <SideBreak />
        </SideBar>

        <Panes>
          <Legend h={20} top="2px solid #808080">
            {'Emociona '}<Val $c="#7a9cc6">(-11.3849)</Val>{', DMI Emoc ('}
            <Val $c="#32cd32">100.000, </Val><Val $c="#ffd700">148.476, </Val><Val $c="#ffa860">23.7562, </Val><Val $c="#fff">85.0000 </Val>
            {'), Permissã ('}<Val $c="#32cd32">24.9272, </Val><Val $c="#ff0000">0.00 </Val>{')'}
          </Legend>
          <TopChart />
          <PaneGap />
          <Legend h={19} top="none">
            {'BES Emocional '}<Val $c={GREEN}>(1.04600, 1.09100, 1.03300, 1.08000, +0.03500)</Val>{', Trading Emocional ('}
            <Val $c="#ff0000">1.08991, </Val><Val $c="#006400">1.03240 </Val>{')'}
          </Legend>
          <BottomChart />
          <DateRow>
            <Dates />
            <DateBlank />
          </DateRow>
          <ScrollRow>
            <ScrollTrack>
              <Tri $dir="l" />
              <ScrollThumb>|||</ScrollThumb>
              <Tri $dir="r" />
            </ScrollTrack>
            <NavTools>
              <NavSep />
              <NavButton $w={22}>{icons.refresh}</NavButton>
              <NavButton $w={18}><NavLetter>D</NavLetter></NavButton>
              <NavSep />
              <NavButton $w={22}>{icons.updown}</NavButton>
              <NavButton $w={12}>{icons.move}</NavButton>
              <NavButton $w={22}>{icons.minus}</NavButton>
              <NavButton $w={17}>{icons.add}</NavButton>
              <NavSep />
              <NavButton $w={20}><Tri $dir="l" $c="#111" $s={5} /></NavButton>
              <NavButton $w={16}><Tri $dir="r" $c="#111" $s={5} /></NavButton>
              <NavButton $w={12}>{icons.list}</NavButton>
            </NavTools>
          </ScrollRow>
        </Panes>
      </Main>

      <BottomBar>
        <Grip />
        <LineSelect $w={129} $line={81}><DownCaret /></LineSelect>
        <LineSelect $w={99} $line={59}><DownCaret /></LineSelect>
        <Sep $w={18} />
        <Palette>
          {PALETTE.map((c, i) => (
            <Swatch key={i} $c={c} $sel={i === 14} />
          ))}
        </Palette>
        <ToolButton $w={17}><PaletteCaret /></ToolButton>
        <Sep $w={8} />
        <Grip />
        <ToolButton><IE /></ToolButton>
        <ToolButton><IE /></ToolButton>
        <ToolButton><IE /></ToolButton>
        <ToolButton><MiniChart /></ToolButton>
        <ToolButton><MiniChart /></ToolButton>
        <ToolButton><MiniWin /></ToolButton>
        <ToolButton><MiniWin /></ToolButton>
        <ToolButton><MiniWin /></ToolButton>
        <ToolButton>{icons.bars}</ToolButton>
        <ToolButton><IE /></ToolButton>
        <Sep $w={14} />
        <SymbolBox>BES</SymbolBox>
        <Sep $w={9} />
        <GreySelect $w={79}><DownCaret /></GreySelect>
        <Sep $w={6} />
        <GreySelect $w={149}><DownCaret /></GreySelect>
        <Sep $w={8} />
        <TradeButton>Trade</TradeButton>
        <Sep $w={18} />
      </BottomBar>

      <StatusBar>
        <StatusCell>
          <StatusPush>For Help, press F1</StatusPush>
          21-01-2013
        </StatusCell>
        <StatusCell />
        <StatusCell>1.22017</StatusCell>
        <StatusCell>16:18</StatusCell>
        <StatusCell $center><Dollar>$</Dollar></StatusCell>
        <StatusCell />
      </StatusBar>
    </Window>
  );
}
